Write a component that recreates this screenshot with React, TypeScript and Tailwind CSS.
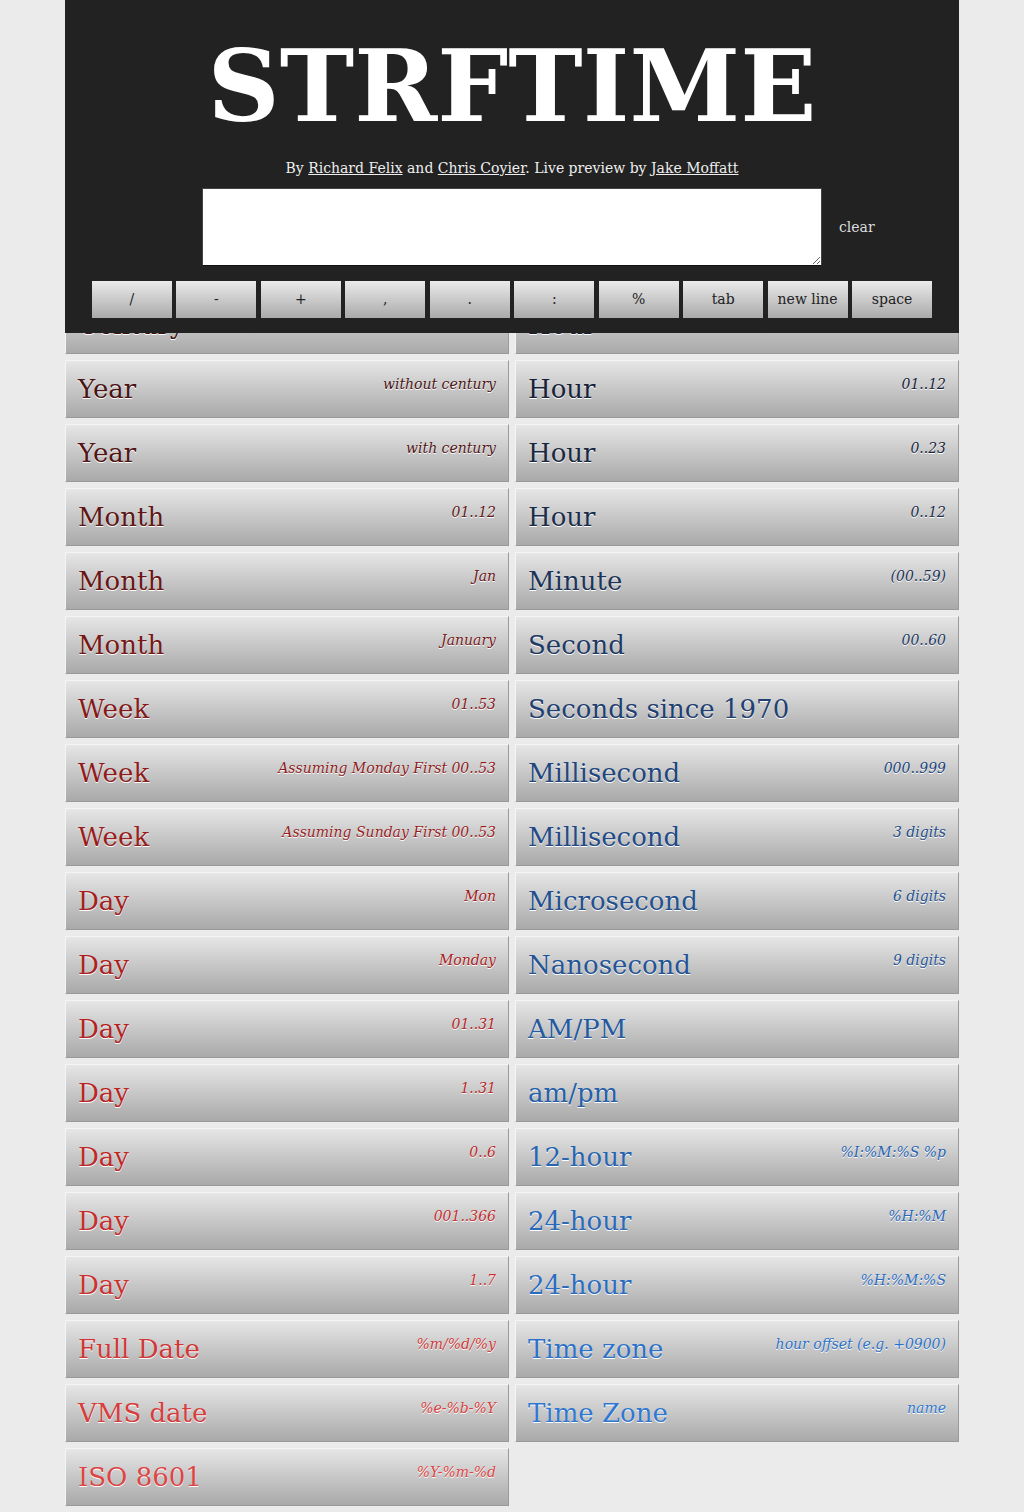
import React from 'react';

type Item = { title: string; desc: string; color: string };

const leftItems: Item[] = [
  { title: 'Century', desc: '', color: 'text-[#3d1010]' },
  { title: 'Year', desc: 'without century', color: 'text-[#4a1414]' },
  { title: 'Year', desc: 'with century', color: 'text-[#521515]' },
  { title: 'Month', desc: '01..12', color: 'text-[#5e1616]' },
  { title: 'Month', desc: 'Jan', color: 'text-[#6b1616]' },
  { title: 'Month', desc: 'January', color: 'text-[#771818]' },
  { title: 'Week', desc: '01..53', color: 'text-[#841a1a]' },
  { title: 'Week', desc: 'Assuming Monday First 00..53', color: 'text-[#8e1c1c]' },
  { title: 'Week', desc: 'Assuming Sunday First 00..53', color: 'text-[#981e1e]' },
  { title: 'Day', desc: 'Mon', color: 'text-[#a22020]' },
  { title: 'Day', desc: 'Monday', color: 'text-[#aa2222]' },
  { title: 'Day', desc: '01..31', color: 'text-[#b22424]' },
  { title: 'Day', desc: '1..31', color: 'text-[#b82626]' },
  { title: 'Day', desc: '0..6', color: 'text-[#be2a2a]' },
  { title: 'Day', desc: '001..366', color: 'text-[#c42e2e]' },
  { title: 'Day', desc: '1..7', color: 'text-[#ca3232]' },
  { title: 'Full Date', desc: '%m/%d/%y', color: 'text-[#d03838]' },
  { title: 'VMS date', desc: '%e-%b-%Y', color: 'text-[#d63e3e]' },
  { title: 'ISO 8601', desc: '%Y-%m-%d', color: 'text-[#dc4545]' },
];

const rightItems: Item[] = [
  { title: 'Hour', desc: '00..23', color: 'text-[#141e32]' },
  { title: 'Hour', desc: '01..12', color: 'text-[#16223a]' },
  { title: 'Hour', desc: '0..23', color: 'text-[#182840]' },
  { title: 'Hour', desc: '0..12', color: 'text-[#1a2e4c]' },
  { title: 'Minute', desc: '(00..59)', color: 'text-[#1c3458]' },
  { title: 'Second', desc: '00..60', color: 'text-[#1e3a64]' },
  { title: 'Seconds since 1970', desc: '', color: 'text-[#1f4070]' },
  { title: 'Millisecond', desc: '000..999', color: 'text-[#21467c]' },
  { title: 'Millisecond', desc: '3 digits', color: 'text-[#224a86]' },
  { title: 'Microsecond', desc: '6 digits', color: 'text-[#23508e]' },
  { title: 'Nanosecond', desc: '9 digits', color: 'text-[#245496]' },
  { title: 'AM/PM', desc: '', color: 'text-[#255a9e]' },
  { title: 'am/pm', desc: '', color: 'text-[#2660a8]' },
  { title: '12-hour', desc: '%I:%M:%S %p', color: 'text-[#2864b0]' },
  { title: '24-hour', desc: '%H:%M', color: 'text-[#2a68b8]' },
  { title: '24-hour', desc: '%H:%M:%S', color: 'text-[#2c6cc0]' },
  { title: 'Time zone', desc: 'hour offset (e.g. +0900)', color: 'text-[#2e72c8]' },
  { title: 'Time Zone', desc: 'name', color: 'text-[#3078d0]' },
];

const keys = ['/', '-', '+', ',', '.', ':', '%', 'tab', 'new line', 'space'];

const Cell = ({ item }: { item: Item }) => (
  <div
    className={`h-[58px] flex justify-between pl-[12px] pr-[12px] border border-t-[#f4f4f4] border-l-[#f4f4f4] border-r-[#9a9a9a] border-b-[#9a9a9a] bg-gradient-to-b from-[#e6e6e6] to-[#a9a9a9] [text-shadow:0_1px_0_#fff] ${item.color}`}
  >
    <span className="self-center text-[26px] leading-[32px]">{item.title}</span>
    {item.desc && <span className="pt-[13px] text-[14px] leading-[20px] italic">{item.desc}</span>}
  </div>
);

export default function App() {
  return (
    <div className="min-h-screen bg-[#ebebeb] font-['DejaVu_Serif',serif]">
      <div className="relative w-[894px] mx-auto">
        {/* header sits over the list */}
        <header className="absolute top-0 left-0 right-0 z-10 h-[333px] bg-[#222] text-white">
          <h1 className="pt-[36px] text-center text-[100px] leading-none font-bold">STRFTIME</h1>
          <p className="mt-[22px] text-center text-[14px] leading-[20px] text-[#eee]">
            By <a className="underline">Richard Felix</a> and <a className="underline">Chris Coyier</a>. Live preview by{' '}
            <a className="underline">Jake Moffatt</a>
          </p>
          <div className="mt-[10px] grid grid-cols-[1fr_620px_1fr] items-center">
            <div />
            <textarea className="h-[78px] bg-white border border-[#444] border-b-[#111] resize-y" />
            <span className="pl-[17px] text-[14px] text-[#ddd]">clear</span>
          </div>
          <div className="mt-[15px] px-[27px] flex gap-[4.5px]">
            {keys.map((k) => (
              <button
                key={k}
                className="flex-1 h-[37px] bg-gradient-to-b from-[#ebebeb] to-[#aaaaaa] text-[14px] text-[#222]"
              >
                {k}
              </button>
            ))}
          </div>
        </header>

        <main className="pt-[296px] pb-[6px] grid grid-cols-2 gap-x-[6px] items-start">
          <div className="flex flex-col gap-[6px]">
            {leftItems.map((it, i) => (
              <Cell key={i} item={it} />
            ))}
          </div>
          <div className="flex flex-col gap-[6px]">
            {rightItems.map((it, i) => (
              <Cell key={i} item={it} />
            ))}
          </div>
        </main>
      </div>
    </div>
  );
}
